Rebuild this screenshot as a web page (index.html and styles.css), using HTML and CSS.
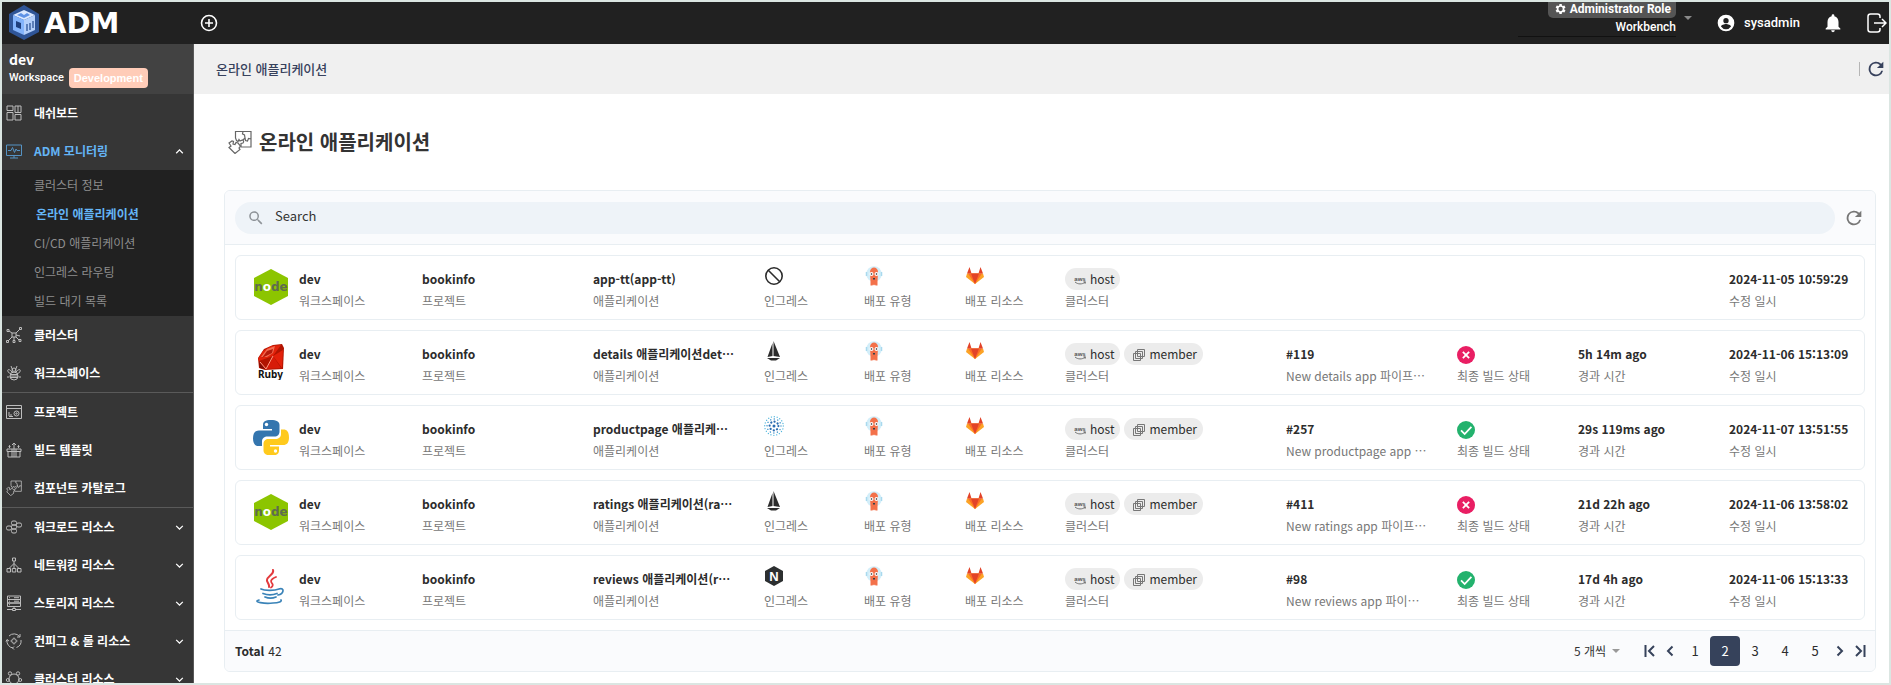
FILE: index.html
```html
<!DOCTYPE html>
<html lang="ko">
<head>
<meta charset="utf-8">
<meta name="viewport" content="width=device-width, initial-scale=1">
<title>온라인 애플리케이션</title>
<link rel="stylesheet" href="styles.css">
</head>
<body>
<svg class="sprite" aria-hidden="true">
  <symbol id="chevron" viewBox="0 0 24 24"><path d="M7.4 8.6 12 13.2l4.6-4.6L18 10l-6 6-6-6z" fill="currentColor"/></symbol>
  <symbol id="caret" viewBox="0 0 10 10"><path d="M1 3h8L5 7z" fill="currentColor"/></symbol>
  <symbol id="refresh" viewBox="0 0 24 24"><path d="M17.65 6.35A8 8 0 1 0 19.73 14h-2.08A6 6 0 1 1 12 6c1.66 0 3.14.69 4.22 1.78L13 11h7V4z" fill="currentColor"/></symbol>
  <symbol id="puzzle" viewBox="0 0 24 24"><g fill="none" stroke="currentColor" stroke-width="1.2"><path d="M7.500 8V1.500H23V17H13v-3.500l2-.5q1.500-2-.5-3l-2.500 1-1-1.500-1 2-1.500-1zM15 1.500l-.5 2.500 2 1 .5 3-2 2M23 9l-2.500-.5-1 2.500-2-.5-.5-3"/><path d="m1 13 3-2 1.500.5-.5 2.500 2 .5 1-2 2 .5 2.500 3-1.500 2 1 1.500-5 4-6-6 2-1.500z"/></g></symbol>
  <symbol id="node" viewBox="0 0 36 36"><path d="M18 0 35 9v18L18 36 1 27V9z" fill="#8cc500"/><text x="18" y="22" text-anchor="middle" class="node-word">n<tspan fill="#fff">o</tspan>de</text></symbol>
  <symbol id="ruby" viewBox="0 0 36 36"><path d="m5 14 6-9 9-4 9-1 2 4-1 21-18 1-6-2z" fill="#b11401"/><path d="m6 17 14-5 8-11-10 1-8 5-5 8z" fill="#e2220b"/><path d="m8 13 6-8 8-3-2 7-6 4z" fill="#f36c52"/><path d="m9 14 5-7 6-2-1 4z" fill="#b51b0c"/><path d="m20 12 10-6-1 18z" fill="#e3200a"/><path d="m13 25 7-13 8 12z" fill="#d71b08"/><path d="m7 18 6 7 7-13" fill="none" stroke="#ff9b86"/><path d="m6 18 6 7-5-1z" fill="#7e0a03"/><text x="17.500" y="34" text-anchor="middle" class="ruby-word">Ruby</text></symbol>
  <symbol id="python" viewBox="0 0 36 36"><path d="M18 1c-6 0-8 1.500-8 5v4h9v1.500H6c-4 0-6 2.500-6 8C0 25 2.500 27 5.500 27H9v-4.500c0-3.500 2.500-5 5.500-5h7c3 0 5-2 5-5V6c0-3.500-3-5-8.500-5z" fill="#3475ae"/><circle cx="13.500" cy="5.500" r="1.700" fill="#fff"/><path d="M18 36.500c6 0 8-1.500 8-5v-4h-9V26h13c4 0 6-2.500 6-7.500 0-5.500-2-8-5.500-8H28V15c0 3.500-2.500 5-5.500 5h-7c-3 0-5 2-5 5v6.500c0 3.500 3 5 7.500 5z" fill="#ffca1d"/><circle cx="22.500" cy="32" r="1.700" fill="#fff"/></symbol>
  <symbol id="java" viewBox="0 0 36 36"><g fill="none" stroke-linecap="round"><path d="M20 1c2 5-9 7-5.500 12 1 2 2 3 1.500 5" stroke="#e33a3d" stroke-width="2"/><path d="M23 8c-7 3-5 5-3.500 7 .8 1.500-.5 3-1.500 3.500" stroke="#e33a3d" stroke-width="1.800"/><path d="M8 20c4 2 14 1.500 18 0M10 24.500c4 1.500 10 1.500 14 0M12 28c3 1.300 8 1.300 11 0M26 20c6-2 5 5-1 6M6 31c-7 2 6 4 14 3 6 0 9-1.500 8-3" stroke="#3a83b8" stroke-width="1.700"/></g></symbol>
  <symbol id="none" viewBox="0 0 20 20"><circle cx="10" cy="10" r="8.200" fill="none" stroke="#2c2c2c" stroke-width="1.600"/><path d="m4 4 12 12" stroke="#2c2c2c" stroke-width="1.600"/></symbol>
  <symbol id="sail" viewBox="0 0 20 20"><path d="M8.500 2v13l-5 1z M9.500 0 16 16l-6.500-1z M3 17h13l-4 2.500H7z" fill="#2c2c2c"/></symbol>
  <symbol id="dots" viewBox="0 0 20 20"><g fill="none" stroke-linecap="round"><circle cx="10" cy="10" r="9.300" stroke="#52b7dd" stroke-width="1.300" stroke-dasharray=".1 2.820"/><circle cx="10" cy="10" r="7" stroke="#3d92ca" stroke-width="1.400" stroke-dasharray=".1 3.565"/><circle cx="10" cy="10" r="4.400" stroke="#2b6cb0" stroke-width="2.200" stroke-dasharray=".1 3.356"/></g><circle cx="10" cy="10" r="1.500" fill="#2b6cb0"/></symbol>
  <symbol id="nginx" viewBox="0 0 20 20"><path d="m10 0 9 5v10l-9 5-9-5V5z" fill="#2c2f30"/><text x="10" y="14.500" text-anchor="middle" class="nginx-word">N</text></symbol>
  <symbol id="argo" viewBox="0 0 20 20"><circle cx="10" cy="8" r="7.800" fill="#d3eef9"/><path d="M2.500 6v4M17.500 6v4" stroke="#a9d9ee" stroke-width="1.500"/><path d="M6 6c0-6 8-6 8 0l-.5 10v3.500h-2l-.5-1-1 1-1-1-.5 1h-2V16z" fill="#f3714a"/><circle cx="7.500" cy="8" r="2" fill="#fff"/><circle cx="12.500" cy="8" r="2" fill="#fff"/><circle cx="7.500" cy="8" r=".8" fill="#222"/><circle cx="12.500" cy="8" r=".8" fill="#222"/><path d="M9 12h2v1.500H9z" fill="#33404a"/></symbol>
  <symbol id="gitlab" viewBox="0 0 20 20"><path d="M10 18 1 11l1-3.500h16L19 11z" fill="#fca326"/><path d="m10 18-7-10.500h14z" fill="#fc6d26"/><path d="m10 18-4-10.500h8z" fill="#e24329"/><path d="M4.500 1 2 7.500h4.500zM15.500 1 18 7.500h-4.500z" fill="#e24329"/></symbol>
  <symbol id="aws" viewBox="0 0 12 12"><text x="6" y="6.500" text-anchor="middle" class="aws-word">aws</text><path d="M1 8c3 2.500 7 2.500 10 .3M9.500 7.800h2l-.5 2" fill="none" stroke="#666" stroke-width=".9"/></symbol>
  <symbol id="layers" viewBox="0 0 12 12"><g fill="none" stroke="#777"><path d="M.5 4.500h7v7h-7zM2.500 2.500h7v7h-7zM4.500.500h7v7h-7z"/></g></symbol>
  <symbol id="fail" viewBox="0 0 20 20"><circle cx="10" cy="10" r="10" fill="#e91e63"/><path d="m6.500 6.500 7 7m0-7-7 7" stroke="#fff" stroke-width="2"/></symbol>
  <symbol id="ok" viewBox="0 0 20 20"><circle cx="10" cy="10" r="10" fill="#23b26d"/><path d="m4.500 10.500 4 4 7.500-8" fill="none" stroke="#fff" stroke-width="2"/></symbol>
</svg>

<header class="topbar">
  <a class="brand" href="#">
    <svg width="32" height="36" viewBox="0 0 32 36" aria-hidden="true"><path d="M16 0 31 9v18L16 35 1 27V9z" fill="#2f5597"/><path d="m16 5 11 5-11 5-11-5z" fill="#dce9ff"/><path d="m5 10 11 5v15L5 25z" fill="#84b4fb"/><path d="m27 10-11 5v15l11-5z" fill="#b4d0fb"/><path d="m9 10 4-2 3 2 3-2 3 2-6 3z" fill="#5f92e6"/><path d="m8 16 5 2v6l-5-2z" fill="#1f3f7c"/><path d="M19 26v-7m3 6v-7m3 5v-7" stroke="#2f5597" stroke-width="1.300"/></svg>
    <span class="brand-name">ADM</span>
  </a>
  <button class="icon-button" aria-label="추가"><svg width="18" height="18" viewBox="0 0 18 18"><g fill="none" stroke="currentColor" stroke-width="1.600"><circle cx="9" cy="9" r="7.500"/><path d="M9 5v8M5 9h8"/></g></svg></button>
  <div class="topbar-end">
    <div class="role">
      <div class="role-picker">
        <label class="role-badge" for="bench"><svg width="12" height="12" viewBox="2 2 20 20" aria-hidden="true"><path fill="currentColor" d="M19.140 12.940a7 7 0 0 0 0-1.880l2.030-1.580-1.920-3.320-2.390.960a7 7 0 0 0-1.620-.94L14.880 3.600h-3.840l-.36 2.580a7 7 0 0 0-1.620.94l-2.390-.96-1.920 3.320 2.030 1.580a7 7 0 0 0 0 1.880l-2.030 1.580 1.920 3.320 2.390-.96a7 7 0 0 0 1.620.94l.36 2.580h3.840l.36-2.580a7 7 0 0 0 1.620-.94l2.390.96 1.920-3.320zM12.960 15.600a3.600 3.600 0 1 1 0-7.200 3.600 3.600 0 0 1 0 7.200z"/></svg>Administrator Role</label>
        <select class="bench" id="bench"><option>Workbench</option></select>
      </div>
      <svg class="role-caret" width="10" height="10" aria-hidden="true"><use href="#caret"/></svg>
    </div>
    <button class="user"><svg width="20" height="20" viewBox="0 0 24 24" aria-hidden="true"><path fill="currentColor" d="M12 2a10 10 0 1 0 0 20 10 10 0 0 0 0-20zm0 4a3.200 3.200 0 1 1 0 6.400A3.200 3.200 0 0 1 12 6zm0 13.500a7 7 0 0 1-6-3.200c0-2 4-3.100 6-3.100s6 1.100 6 3.100a7 7 0 0 1-6 3.200z"/></svg>sysadmin</button>
    <button class="icon-button bell" aria-label="알림"><svg width="22" height="22" viewBox="0 0 24 24"><path fill="currentColor" d="M12 22a2 2 0 0 0 2-2h-4a2 2 0 0 0 2 2zm6-6v-5c0-3.070-1.640-5.640-4.500-6.320V4a1.500 1.500 0 0 0-3 0v.68C7.640 5.360 6 7.920 6 11v5l-2 2v1h16v-1z"/></svg></button>
    <button class="icon-button" aria-label="로그아웃"><svg width="20" height="20" viewBox="0 0 20 20"><path fill="none" stroke="currentColor" stroke-width="1.500" d="M13 5V3.500Q13 1 10.500 1h-7Q1 1 1 3.500v13Q1 19 3.500 19h7q2.500 0 2.500-2.500V15M7 10h12m-4-4 4 4-4 4"/></svg></button>
  </div>
</header>

<div class="shell">
  <nav class="sidebar" aria-label="메뉴">
    <div class="workspace">
      <strong class="workspace-name">dev</strong>
      <div class="workspace-line"><span>Workspace</span><span class="env">Development</span></div>
    </div>
    <a class="item" href="#"><svg class="glyph" viewBox="0 0 16 16"><path d="M1 1h6v4.500H1zM1 7.500h6V15H1zM9 1h6v6.500H9zM9 9.500h6V15H9zM12 1v6.500"/></svg>대쉬보드</a>
    <a class="item item-on" href="#"><svg class="glyph" viewBox="0 0 16 16"><path d="M.5 2h15v10.500H.5zM2 7.500h3l1.500-3 2 5L10 6l1 1.500h3M8 12.500V15M4 15h8"/></svg>ADM 모니터링<svg class="turn up" viewBox="0 0 24 24"><use href="#chevron"/></svg></a>
    <div class="submenu">
      <a class="sub" href="#">클러스터 정보</a>
      <a class="sub sub-on" href="#">온라인 애플리케이션</a>
      <a class="sub" href="#">CI/CD 애플리케이션</a>
      <a class="sub" href="#">인그레스 라우팅</a>
      <a class="sub" href="#">빌드 대기 목록</a>
    </div>
    <div class="group">
      <a class="item" href="#"><svg class="glyph" viewBox="0 0 16 16"><path d="M6 6h4v4H6zM6 6 3 4M10 6l4-4M10 10l3 3M6 10l-4 4M10 8l4 1M8 10v4"/><path d="M1 2.500h2v2H1zM13.500.500h2v2h-2zM13 12.500h2v2h-2zM.5 13.500h2v2h-2zM7 13.500h2v2H7z"/></svg>클러스터</a>
      <a class="item" href="#"><svg class="glyph" viewBox="0 0 16 16"><circle cx="8" cy="11" r="4"/><path d="M4.500 9.500h7M4 11h8M4.500 12.500h7M6 7c-5-6-6 1-1 1.500M10 7c5-6 6 1 1 1.500M7 6 5 1M9 6l2-5M3.500 12H1M12.500 12H15"/><circle cx="8" cy="5" r="2"/></svg>워크스페이스</a>
    </div>
    <div class="group">
      <a class="item" href="#"><svg class="glyph" viewBox="0 0 16 16"><path d="M.5 1.500h15v13H.5zM.5 4.500h15M3 12V8M5 12v-2M3 12.500h4"/><circle cx="10.500" cy="9.500" r="2.500"/><circle cx="10.500" cy="9.500" r=".7"/></svg>프로젝트</a>
      <a class="item" href="#"><svg class="glyph" viewBox="0 0 16 16"><path d="M2 9.500h12V15H2zM1 7h14v2.500H1zM8 15V1M6 3l2-2 2 2M3.500 6V3.500M2.500 4.500l1-1 1 1M12.500 6V3.500M11.500 4.500l1-1 1 1M6 7v8M10 7v8"/></svg>빌드 템플릿</a>
      <a class="item" href="#"><svg class="glyph"><use href="#puzzle"/></svg>컴포넌트 카탈로그</a>
    </div>
    <div class="group">
      <a class="item" href="#"><svg class="glyph" viewBox="0 0 16 16"><rect x="5.500" y="2" width="5" height="4" rx="1.500"/><rect x="10.500" y="4" width="5" height="4" rx="1.500"/><rect x=".5" y="7" width="5" height="4" rx="1.500"/><rect x="5.500" y="6" width="5" height="4" rx="1.500"/><rect x="5.500" y="10" width="5" height="4" rx="1.500"/></svg>워크로드 리소스<svg class="turn" viewBox="0 0 24 24"><use href="#chevron"/></svg></a>
      <a class="item" href="#"><svg class="glyph" viewBox="0 0 16 16"><path d="M6.500 1h3v3h-3zM1 11.500h3.500V15H1zM6.300 11.500h3.500V15H6.300zM11.500 11.500H15V15h-3.500zM8 4v7.500M8 6.500l-5 5M8 6.500l5 5"/></svg>네트워킹 리소스<svg class="turn" viewBox="0 0 24 24"><use href="#chevron"/></svg></a>
      <a class="item" href="#"><svg class="glyph" viewBox="0 0 16 16"><path d="M1.500 1h13v3.500h-13zM1.500 4.500h13V8h-13zM1.500 8h13v3.500h-13zM8 11.500V14M1 14.500h5.500M9.500 14.500H15M6.500 13.500h3v2h-3zM3 2.700h1M3 6.200h1M3 9.700h1M8 2.700h5M8 6.200h5"/></svg>스토리지 리소스<svg class="turn" viewBox="0 0 24 24"><use href="#chevron"/></svg></a>
      <a class="item" href="#"><svg class="glyph" viewBox="0 0 16 16"><path d="M3 3a7 7 0 0 1 10.500.5M15 7a7 7 0 0 1-4.500 7.500M7 15A7 7 0 0 1 1 7M14 1v3h-3M8 13.500 6.500 15 8 16.500M0 8.500 1 6.500l2 1.500"/><circle cx="8" cy="8" r="2.300"/><path d="M8 4.500v1M8 10.500v1M4.500 8h1M10.500 8h1"/></svg>컨피그 &amp; 롤 리소스<svg class="turn" viewBox="0 0 24 24"><use href="#chevron"/></svg></a>
      <a class="item" href="#"><svg class="glyph" viewBox="0 0 16 16"><circle cx="8" cy="8" r="5"/><circle cx="4" cy="2.500" r="1.700"/><circle cx="12" cy="2.500" r="1.700"/><circle cx="1.800" cy="9" r="1.500"/><circle cx="14.200" cy="9" r="1.500"/></svg>클러스터 리소스<svg class="turn" viewBox="0 0 24 24"><use href="#chevron"/></svg></a>
    </div>
  </nav>

  <div class="content">
    <div class="crumbs">
      <span>온라인 애플리케이션</span>
      <button class="icon-button crumb-refresh" aria-label="새로고침"><svg width="22" height="22"><use href="#refresh"/></svg></button>
    </div>
    <main class="page">
      <h1 class="page-title"><svg width="24" height="24" aria-hidden="true"><use href="#puzzle"/></svg>온라인 애플리케이션</h1>
      <section class="panel">
        <div class="panel-search">
          <label class="search"><svg width="18" height="18" viewBox="0 0 24 24" aria-hidden="true"><path fill="currentColor" d="M15.500 14h-.8l-.3-.3a6.500 6.500 0 1 0-.7.7l.3.3v.8l5 5 1.500-1.500zm-6 0a4.500 4.500 0 1 1 0-9 4.500 4.500 0 0 1 0 9z"/></svg><input type="text" placeholder="Search" aria-label="Search"></label>
          <button class="icon-button list-refresh" aria-label="목록 새로고침"><svg width="22" height="22"><use href="#refresh"/></svg></button>
        </div>
        <div class="rows">
          <article class="row">
            <svg class="logo"><use href="#node"/></svg>
            <div class="cell"><b>dev</b><span>워크스페이스</span></div>
            <div class="cell"><b>bookinfo</b><span>프로젝트</span></div>
            <div class="cell"><b>app-tt(app-tt)</b><span>애플리케이션</span></div>
            <div class="cell"><svg class="mark"><use href="#none"/></svg><span>인그레스</span></div>
            <div class="cell"><svg class="mark"><use href="#argo"/></svg><span>배포 유형</span></div>
            <div class="cell"><svg class="mark"><use href="#gitlab"/></svg><span>배포 리소스</span></div>
            <div class="cell"><div class="chips"><i class="chip"><svg><use href="#aws"/></svg>host</i></div><span>클러스터</span></div>
            <div class="cell"></div>
            <div class="cell"></div>
            <div class="cell"></div>
            <div class="cell"><b>2024-11-05 10:59:29</b><span>수정 일시</span></div>
          </article>
          <article class="row">
            <svg class="logo"><use href="#ruby"/></svg>
            <div class="cell"><b>dev</b><span>워크스페이스</span></div>
            <div class="cell"><b>bookinfo</b><span>프로젝트</span></div>
            <div class="cell"><b>details 애플리케이션det…</b><span>애플리케이션</span></div>
            <div class="cell"><svg class="mark"><use href="#sail"/></svg><span>인그레스</span></div>
            <div class="cell"><svg class="mark"><use href="#argo"/></svg><span>배포 유형</span></div>
            <div class="cell"><svg class="mark"><use href="#gitlab"/></svg><span>배포 리소스</span></div>
            <div class="cell"><div class="chips"><i class="chip"><svg><use href="#aws"/></svg>host</i><i class="chip"><svg><use href="#layers"/></svg>member</i></div><span>클러스터</span></div>
            <div class="cell"><b>#119</b><span>New details app 파이프…</span></div>
            <div class="cell"><svg class="state"><use href="#fail"/></svg><span>최종 빌드 상태</span></div>
            <div class="cell"><b>5h 14m ago</b><span>경과 시간</span></div>
            <div class="cell"><b>2024-11-06 15:13:09</b><span>수정 일시</span></div>
          </article>
          <article class="row">
            <svg class="logo"><use href="#python"/></svg>
            <div class="cell"><b>dev</b><span>워크스페이스</span></div>
            <div class="cell"><b>bookinfo</b><span>프로젝트</span></div>
            <div class="cell"><b>productpage 애플리케…</b><span>애플리케이션</span></div>
            <div class="cell"><svg class="mark"><use href="#dots"/></svg><span>인그레스</span></div>
            <div class="cell"><svg class="mark"><use href="#argo"/></svg><span>배포 유형</span></div>
            <div class="cell"><svg class="mark"><use href="#gitlab"/></svg><span>배포 리소스</span></div>
            <div class="cell"><div class="chips"><i class="chip"><svg><use href="#aws"/></svg>host</i><i class="chip"><svg><use href="#layers"/></svg>member</i></div><span>클러스터</span></div>
            <div class="cell"><b>#257</b><span>New productpage app …</span></div>
            <div class="cell"><svg class="state"><use href="#ok"/></svg><span>최종 빌드 상태</span></div>
            <div class="cell"><b>29s 119ms ago</b><span>경과 시간</span></div>
            <div class="cell"><b>2024-11-07 13:51:55</b><span>수정 일시</span></div>
          </article>
          <article class="row">
            <svg class="logo"><use href="#node"/></svg>
            <div class="cell"><b>dev</b><span>워크스페이스</span></div>
            <div class="cell"><b>bookinfo</b><span>프로젝트</span></div>
            <div class="cell"><b>ratings 애플리케이션(ra…</b><span>애플리케이션</span></div>
            <div class="cell"><svg class="mark"><use href="#sail"/></svg><span>인그레스</span></div>
            <div class="cell"><svg class="mark"><use href="#argo"/></svg><span>배포 유형</span></div>
            <div class="cell"><svg class="mark"><use href="#gitlab"/></svg><span>배포 리소스</span></div>
            <div class="cell"><div class="chips"><i class="chip"><svg><use href="#aws"/></svg>host</i><i class="chip"><svg><use href="#layers"/></svg>member</i></div><span>클러스터</span></div>
            <div class="cell"><b>#411</b><span>New ratings app 파이프…</span></div>
            <div class="cell"><svg class="state"><use href="#fail"/></svg><span>최종 빌드 상태</span></div>
            <div class="cell"><b>21d 22h ago</b><span>경과 시간</span></div>
            <div class="cell"><b>2024-11-06 13:58:02</b><span>수정 일시</span></div>
          </article>
          <article class="row">
            <svg class="logo"><use href="#java"/></svg>
            <div class="cell"><b>dev</b><span>워크스페이스</span></div>
            <div class="cell"><b>bookinfo</b><span>프로젝트</span></div>
            <div class="cell"><b>reviews 애플리케이션(r…</b><span>애플리케이션</span></div>
            <div class="cell"><svg class="mark"><use href="#nginx"/></svg><span>인그레스</span></div>
            <div class="cell"><svg class="mark"><use href="#argo"/></svg><span>배포 유형</span></div>
            <div class="cell"><svg class="mark"><use href="#gitlab"/></svg><span>배포 리소스</span></div>
            <div class="cell"><div class="chips"><i class="chip"><svg><use href="#aws"/></svg>host</i><i class="chip"><svg><use href="#layers"/></svg>member</i></div><span>클러스터</span></div>
            <div class="cell"><b>#98</b><span>New reviews app 파이…</span></div>
            <div class="cell"><svg class="state"><use href="#ok"/></svg><span>최종 빌드 상태</span></div>
            <div class="cell"><b>17d 4h ago</b><span>경과 시간</span></div>
            <div class="cell"><b>2024-11-06 15:13:33</b><span>수정 일시</span></div>
          </article>
        </div>
        <footer class="panel-foot">
          <div class="total"><b>Total</b>42</div>
          <div class="pager">
            <label class="size"><select aria-label="페이지 크기"><option>5 개씩</option></select><svg width="10" height="10" aria-hidden="true"><use href="#caret"/></svg></label>
            <button class="step" aria-label="처음"><svg viewBox="0 0 12 14"><path d="M1.500 1v12M10 2 5 7l5 5"/></svg></button>
            <button class="step" aria-label="이전"><svg viewBox="0 0 12 14"><path d="M8.500 2.500 4 7l4.500 4.500"/></svg></button>
            <button class="num">1</button>
            <button class="num num-on" aria-current="page">2</button>
            <button class="num">3</button>
            <button class="num">4</button>
            <button class="num">5</button>
            <button class="step" aria-label="다음"><svg viewBox="0 0 12 14"><path d="M3.500 2.500 8 7l-4.500 4.500"/></svg></button>
            <button class="step" aria-label="마지막"><svg viewBox="0 0 12 14"><path d="M10.500 1v12M2 2l5 5-5 5"/></svg></button>
          </div>
        </footer>
      </section>
    </main>
  </div>
</div>
</body>
</html>
```

FILE: styles.css
```css
* { box-sizing: border-box; }

body {
  margin: 0;
  height: 100vh;
  border: 2px solid #dbe6e2;
  display: flex;
  flex-direction: column;
  overflow: hidden;
  background: #fff;
  color: #2c2c2c;
  font: 12px/18px "Noto Sans CJK KR", "Noto Sans", sans-serif;
}

button, input, select { font: inherit; color: inherit; border: 0; padding: 0; margin: 0; background: none; }
select { appearance: none; }
button { cursor: pointer; }
a { color: inherit; text-decoration: none; }
.sprite { display: none; }
.icon-button { display: flex; align-items: center; justify-content: center; }

.node-word { font: bold 12px "DejaVu Sans", sans-serif; fill: #5f6b50; }
.ruby-word { font: bold 10px "Noto Sans", sans-serif; fill: #111; }
.nginx-word { font: bold 13px "Liberation Sans", sans-serif; fill: #fff; }
.aws-word { font: bold 6px "Liberation Sans", sans-serif; fill: #555; }

/* Top bar */
.topbar { flex: none; height: 42px; display: flex; align-items: center; background: #212121; color: #fff; }
.brand { width: 198px; display: flex; align-items: center; gap: 4px; padding-left: 6px; }
.brand-name { font: bold 29px/30px "DejaVu Sans", sans-serif; }
.topbar-end { margin-left: auto; align-self: stretch; display: flex; align-items: center; padding-right: 2px; }
.role { align-self: flex-start; display: flex; gap: 7px; margin-right: 23px; font-family: Roboto, sans-serif; }
.role-picker { width: 158px; display: flex; flex-direction: column; align-items: flex-end; }
.role-badge { display: flex; align-items: center; gap: 4px; height: 16px; padding: 0 5px 2px 6px; border-radius: 0 0 5px 5px; background: #555; font-weight: bold; }
.bench { width: 100%; height: 19px; border-bottom: 1px solid #111; font-weight: 500; text-align: right; text-align-last: right; }
.role-caret { margin-top: 11px; color: #8a8a8a; }
.user { display: flex; align-items: center; gap: 8px; font: 500 13px/20px Roboto, sans-serif; }
.bell { margin: 0 23px 0 22px; }

.shell { flex: 1; min-height: 0; display: flex; }

/* Sidebar */
.sidebar { flex: none; width: 192px; overflow: hidden; background: #363636; border-right: 1px solid #585858; color: #fff; }
.workspace { height: 50px; padding: 6px 7px; background: #424242; }
.workspace-name { display: block; font-size: 14px; line-height: 18px; }
.workspace-line { display: flex; align-items: center; gap: 5px; font: 500 11px/20px Roboto, sans-serif; }
.env { padding: 0 5px; border-radius: 4px; background: #ffccb8; font: bold 11px/20px "Liberation Sans", sans-serif; }
.item { height: 38px; display: flex; align-items: center; gap: 12px; padding: 0 6px 0 4px; font-weight: bold; }
.item-on { color: #64b5f6; }
.glyph { width: 16px; height: 16px; fill: none; stroke: #bdbdbd; stroke-width: 1; color: #bdbdbd; overflow: visible; }
.item-on .glyph { stroke: #5593c4; }
.turn { width: 15px; height: 15px; margin-left: auto; color: #fff; overflow: visible; }
.up { transform: rotate(180deg); }
.submenu { padding: 0 0 1px 32px; background: #212121; color: #8e8e8e; }
.sub { display: block; line-height: 29px; }
.sub-on { padding-left: 2px; color: #64b5f6; font-weight: bold; }
.group + .group { border-top: 1px solid #5a5a5a; }

/* Content */
.content { flex: 1; min-width: 0; display: flex; flex-direction: column; }
.crumbs { flex: none; height: 50px; display: flex; align-items: center; justify-content: space-between; padding: 0 2px 0 22px; background: #f0f0f0; color: #37415c; font-size: 13px; font-weight: 500; }
.crumb-refresh { height: 14px; padding-left: 5px; border-left: 1px solid #b5b5b5; }
.page { padding: 32px 13px 12px 30px; }
.page-title { display: flex; align-items: center; gap: 7px; margin: 0 0 32px 4px; font-size: 20px; line-height: 32px; font-weight: bold; color: #333; }
.page-title svg { color: #666; }

.panel { border: 1px solid #e8eef2; border-radius: 6px; overflow: hidden; }
.panel-search { height: 54px; display: flex; align-items: center; gap: 8px; padding: 0 10px; background: #fafbfd; border-bottom: 1px solid #e8eef2; }
.search { flex: 1; height: 32px; display: flex; align-items: center; gap: 10px; padding: 0 12px; border-radius: 16px; background: #eef3f8; color: #8f9499; }
.search input { flex: 1; min-width: 0; padding-bottom: 3px; outline: 0; font-size: 13px; line-height: 20px; color: #333; }
.search input::placeholder { color: #333; opacity: 1; }
.list-refresh { color: #777; }

.rows { display: grid; gap: 10px; padding: 10px; }
.row {
  display: grid;
  grid-template-columns: 46px 123fr 171fr 171fr 100fr 101fr 100fr 221fr 171fr 121fr 151fr 131fr;
  min-height: 65px;
  padding: 10px 4px 8px 17px;
  border: 1px solid #e8eef2;
  border-radius: 6px;
}
.logo { width: 36px; height: 36px; margin-top: 3px; }
.cell { min-width: 0; display: grid; grid-template-rows: 25px 20px; align-content: start; }
.cell b, .cell > span { overflow: hidden; text-overflow: ellipsis; white-space: nowrap; line-height: 20px; }
.cell b { padding-top: 2px; line-height: 22px; }
.cell > span { color: #777; }
.mark { width: 20px; height: 20px; }
.state { width: 18px; height: 18px; margin-top: 5px; }
.chips { display: flex; gap: 4px; padding-top: 2px; }
.chip { display: flex; align-items: center; gap: 4px; height: 22px; padding: 0 6px 0 9px; border-radius: 11px; background: #ececec; font-style: normal; }
.chip svg { width: 12px; height: 12px; margin-top: 2px; }

.panel-foot { height: 41px; display: flex; align-items: center; justify-content: space-between; padding: 0 5px 0 10px; border-top: 1px solid #e8eef2; background: #fafbfd; }
.total { display: flex; gap: 4px; }
.pager { display: flex; align-items: center; font-size: 13px; }
.size { display: flex; align-items: center; gap: 5px; margin-right: 19px; font-size: 12px; color: #333; }
.size svg { color: #999; }
.step { width: 20px; height: 30px; display: flex; align-items: center; justify-content: center; }
.step svg { width: 12px; height: 14px; fill: none; stroke: #36425b; stroke-width: 2; }
.num { width: 30px; height: 30px; border-radius: 4px; }
.num-on { background: #36425b; color: #fff; }
```
